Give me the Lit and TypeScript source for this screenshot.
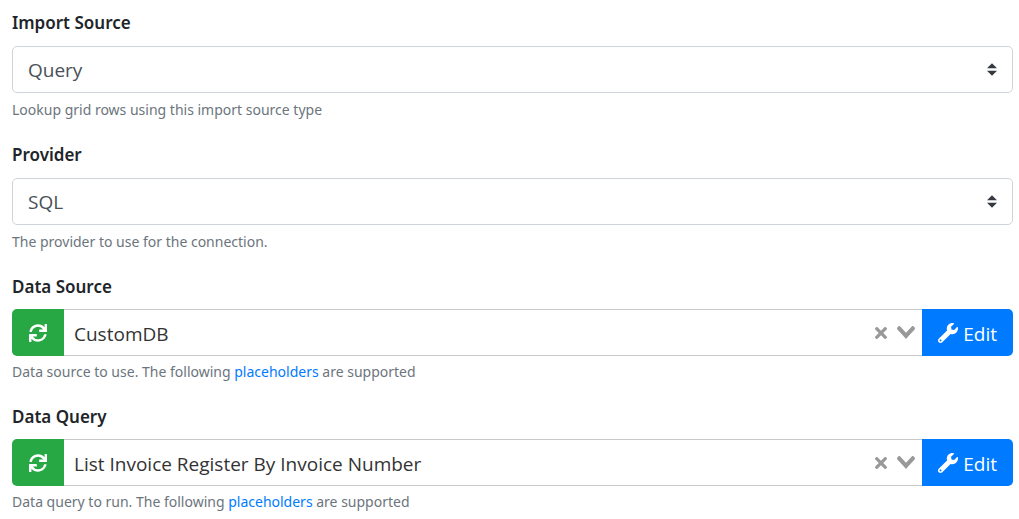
import { LitElement, html, css, svg } from "lit";
import { customElement, property } from "lit/decorators.js";

const base = css`
  :host {
    display: block;
    font-family: "Noto Sans", "Open Sans", sans-serif;
    color: #212529;
  }
  * {
    box-sizing: border-box;
  }
  .label {
    display: block;
    margin-bottom: 11px;
    font-size: 17px;
    font-weight: 600;
    line-height: 24px;
  }
  .help {
    font-size: 14px;
    line-height: 23px;
    color: #6c757d;
  }
  .help a {
    color: #007bff;
    text-decoration: none;
  }
`;

const syncIcon = svg`<path d="M440.65 12.57l4 82.77A247.16 247.16 0 0 0 255.83 8C134.73 8 33.91 94.92 12.29 209.82A12 12 0 0 0 24.09 224h49.05a12 12 0 0 0 11.67-9.26 175.91 175.91 0 0 1 317-56.94l-101.46-4.86a12 12 0 0 0-12.57 12v47.41a12 12 0 0 0 12 12H500a12 12 0 0 0 12-12V12a12 12 0 0 0-12-12h-47.37a12 12 0 0 0-11.98 12.57zM255.83 432a175.61 175.61 0 0 1-146-77.8l101.8 4.87a12 12 0 0 0 12.57-12v-47.4a12 12 0 0 0-12-12H12a12 12 0 0 0-12 12V500a12 12 0 0 0 12 12h47.35a12 12 0 0 0 12-12.6l-4.15-82.57A247.17 247.17 0 0 0 255.83 504c121.11 0 221.93-86.92 243.55-201.82a12 12 0 0 0-11.8-14.18h-49.05a12 12 0 0 0-11.67 9.26A175.86 175.86 0 0 1 255.83 432z"/>`;

const wrenchIcon = svg`<path d="M507.73 109.1c-2.24-9.03-13.54-12.09-20.12-5.51l-74.36 74.36-67.88-11.31-11.31-67.88 74.36-74.36c6.62-6.62 3.43-17.9-5.66-20.16-47.38-11.74-99.55.91-136.58 37.93-39.64 39.64-50.55 97.1-34.05 147.2L18.74 402.76c-24.99 24.99-24.99 65.51 0 90.5 24.99 24.99 65.51 24.99 90.5 0l213.21-213.21c50.12 16.71 107.47 5.68 147.37-34.22 37.07-37.07 49.7-89.32 37.91-136.73zM64 472c-13.25 0-24-10.75-24-24 0-13.26 10.75-24 24-24s24 10.74 24 24c0 13.25-10.75 24-24 24z"/>`;

const clearIcon = svg`<path d="M6.895455 5l2.842897-2.842898c.348864-.348863.348864-.914488 0-1.263636L9.106534.261648c-.348864-.348864-.914489-.348864-1.263636 0L5 3.104545 2.157102.261648c-.348863-.348864-.914488-.348864-1.263636 0L.261648.893466c-.348864.348864-.348864.914489 0 1.263636L3.104545 5 .261648 7.842898c-.348864.348863-.348864.914488 0 1.263636l.631818.631818c.348864.348864.914773.348864 1.263636 0L5 6.895455l2.842898 2.842897c.348863.348864.914772.348864 1.263636 0l.631818-.631818c.348864-.348864.348864-.914489 0-1.263636L6.895455 5z"/>`;

const openIcon = svg`<path d="M9.211364 7.59931l4.48338-4.867229c.407008-.441854.407008-1.158247 0-1.60046l-.73712-.80023c-.407008-.441854-1.066904-.441854-1.474243 0L7 5.198617 2.51662.33139c-.407008-.441853-1.066904-.441853-1.474243 0l-.737121.80023c-.407008.441854-.407008 1.158248 0 1.600461l4.48338 4.867228L7 10l2.211364-2.40069z"/>`;

@customElement("select-field")
class SelectField extends LitElement {
  @property() label = "";
  @property() value = "";
  @property() help = "";

  static styles = [
    base,
    css`
      .control {
        display: grid;
        align-items: center;
        margin-bottom: 5px;
      }
      .select,
      .caret {
        grid-area: 1 / 1;
      }
      .select {
        appearance: none;
        width: 100%;
        height: 47px;
        padding: 0 40px 0 15px;
        border: 1px solid #ced4da;
        border-radius: 5px;
        background: #fff;
        color: #495057;
        font-family: "Open Sans", sans-serif;
        font-size: 19px;
      }
      .caret {
        justify-self: end;
        width: 10px;
        height: 13px;
        margin-right: 16px;
        fill: #343a40;
        pointer-events: none;
      }
    `,
  ];

  render() {
    return html`
      <label class="label" for="field">${this.label}</label>
      <div class="control">
        <select class="select" id="field" aria-describedby="help">
          <option selected>${this.value}</option>
        </select>
        <svg class="caret" viewBox="0 0 4 5" aria-hidden="true">
          <path d="M2 0L0 2h4zm0 5L0 3h4z" />
        </svg>
      </div>
      <div class="help" id="help">${this.help}</div>
    `;
  }
}

@customElement("lookup-field")
class LookupField extends LitElement {
  @property() label = "";
  @property() value = "";
  @property() help = "";

  static styles = [
    base,
    css`
      .label {
        margin-bottom: 10px;
      }
      .group {
        display: flex;
        height: 47px;
        margin-bottom: 4px;
      }
      button {
        display: flex;
        align-items: center;
        justify-content: center;
        padding: 0;
        border: 0;
        background: none;
        font-family: "Open Sans", sans-serif;
        font-size: 19px;
        cursor: pointer;
      }
      .refresh {
        width: 52px;
        border-radius: 5px 0 0 5px;
        background: #28a745;
      }
      .edit {
        gap: 5px;
        padding: 2px 16px 0;
        border-radius: 0 5px 5px 0;
        background: #007bff;
        color: #fff;
      }
      .icon {
        width: 18px;
        height: 18px;
        fill: #fff;
      }
      .edit .icon {
        width: 20px;
        height: 20px;
        margin-bottom: 2px;
      }
      .combo {
        display: flex;
        flex: 1;
        align-items: center;
        min-width: 0;
        padding-right: 7px;
        border: solid #c8c8c8;
        border-width: 1px 0;
      }
      .input {
        flex: 1;
        min-width: 0;
        height: 100%;
        padding: 2px 10px 0;
        border: 0;
        outline: 0;
        background: none;
        color: #333;
        font-family: "Open Sans", sans-serif;
        font-size: 19px;
      }
      .clear {
        margin-right: 10px;
      }
      .clear svg {
        width: 12px;
        height: 12px;
        fill: #999;
      }
      .open svg {
        width: 18px;
        height: 13px;
        fill: #999;
      }
    `,
  ];

  render() {
    return html`
      <label class="label" for="field">${this.label}</label>
      <div class="group">
        <button class="refresh" type="button" aria-label="Refresh">
          <svg class="icon" viewBox="0 0 512 512">${syncIcon}</svg>
        </button>
        <div class="combo">
          <input class="input" id="field" type="text" .value=${this.value} aria-describedby="help" />
          <button class="clear" type="button" aria-label="Clear">
            <svg viewBox="0 0 10 10">${clearIcon}</svg>
          </button>
          <button class="open" type="button" aria-label="Open list">
            <svg viewBox="0 0 14 10">${openIcon}</svg>
          </button>
        </div>
        <button class="edit" type="button">
          <svg class="icon" viewBox="0 0 512 512" aria-hidden="true">${wrenchIcon}</svg>
          <span>Edit</span>
        </button>
      </div>
      <div class="help" id="help">${this.help} <a href="#">placeholders</a> are supported</div>
    `;
  }
}

@customElement("app-root")
class AppRoot extends LitElement {
  static styles = css`
    :host {
      display: block;
    }
    .form {
      display: flex;
      flex-direction: column;
      gap: 22px;
      padding: 11px 6px 6px 12px;
    }
  `;

  render() {
    return html`
      <form class="form">
        <select-field
          label="Import Source"
          value="Query"
          help="Lookup grid rows using this import source type"
        ></select-field>
        <select-field
          label="Provider"
          value="SQL"
          help="The provider to use for the connection."
        ></select-field>
        <lookup-field
          label="Data Source"
          value="CustomDB"
          help="Data source to use. The following"
        ></lookup-field>
        <lookup-field
          label="Data Query"
          value="List Invoice Register By Invoice Number"
          help="Data query to run. The following"
        ></lookup-field>
      </form>
    `;
  }
}
